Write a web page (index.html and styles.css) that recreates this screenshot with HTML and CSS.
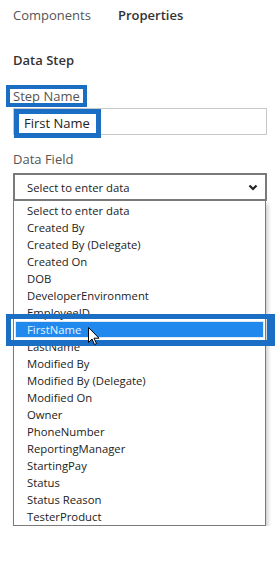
FILE: index.html
```html
<!DOCTYPE html>
<html lang="en">
  <head>
    <meta charset="UTF-8" />
    <meta name="viewport" content="width=device-width, initial-scale=1.0" />
    <title>Properties</title>
    <link rel="stylesheet" href="styles.css">
  </head>
  <body>
    <div class="panel">
      <div class="tabs">
        <span class="tab">Components</span>
        <span class="tab active">Properties</span>
      </div>

      <div class="section-title">Data Step</div>

      <div class="field-label"><span class="mark">Step Name</span></div>
      <div class="text-input"><span class="mark mark-input">First Name</span></div>

      <div class="field-label">Data Field</div>
      <div class="select">
        <span>Select to enter data</span>
        <svg class="chevron" width="10" height="7" viewBox="0 0 10 7">
          <polyline points="1.5,1.5 5,5 8.5,1.5" fill="none" stroke="#222" stroke-width="2.2" />
        </svg>
      </div>

      <div class="dropdown">
        <ul class="options">
          <li>Select to enter data</li>
          <li>Created By</li>
          <li>Created By (Delegate)</li>
          <li>Created On</li>
          <li>DOB</li>
          <li>DeveloperEnvironment</li>
          <li>EmployeeID</li>
          <li class="selected">FirstName</li>
          <li>LastName</li>
          <li>Modified By</li>
          <li>Modified By (Delegate)</li>
          <li>Modified On</li>
          <li>Owner</li>
          <li>PhoneNumber</li>
          <li>ReportingManager</li>
          <li>StartingPay</li>
          <li>Status</li>
          <li>Status Reason</li>
          <li>TesterProduct</li>
        </ul>
        <!-- recuadro azul de anotacion sobre la opcion elegida -->
        <div class="highlight-box"></div>
        <svg class="cursor" width="12" height="19" viewBox="0 0 12 19">
          <path d="M0.5,0.5 L0.5,15.5 L4,12 L6.5,17.5 L8.5,16.6 L6,11.2 L11,11.2 Z" fill="#fff" stroke="#000" stroke-width="1" stroke-linejoin="round" />
        </svg>
      </div>
    </div>
  </body>
</html>
```

FILE: styles.css
```css
body {
  margin: 0;
  padding: 0;
  background: #fff;
  font-family: "Open Sans", "Noto Sans", sans-serif;
  color: #333;
}

.panel {
  padding: 0 13px;
}

.tabs {
  display: flex;
  gap: 27px;
  height: 30px;
  line-height: 30px;
  font-size: 13px;
}
.tab {
  color: #555;
}
.tab.active {
  color: #333;
  font-weight: 600;
}

.section-title {
  margin-top: 20px;
  line-height: 20px;
  font-size: 13px;
  font-weight: 600;
  color: #333;
}

.field-label {
  margin-top: 14px;
  height: 20px;
  line-height: 20px;
  font-size: 13px;
  color: #555;
}

.mark {
  display: inline-block;
  line-height: 14px;
  padding: 0 3px;
  margin-left: -3px;
  vertical-align: middle;
  outline: 4px solid #1a6fc5;
  background: #fff;
}

.text-input {
  margin-top: 4px;
  height: 27px;
  box-sizing: border-box;
  border: 1px solid #c8c8c8;
  padding: 4px 0 0 5px;
  font-size: 13px;
  color: #222;
}
.mark-input {
  line-height: 19px;
  padding: 0 6px 0 5px;
  margin-left: 0;
  outline-width: 5px;
}

.field-label + .select {
  margin-top: 4px;
}
.select {
  height: 28px;
  box-sizing: border-box;
  border: 2px solid #7a7a7a;
  display: flex;
  align-items: center;
  justify-content: space-between;
  padding: 0 7px 0 12px;
  font-size: 11.3px;
  color: #222;
}

.dropdown {
  position: relative;
  width: 253px;
}
.options {
  list-style: none;
  margin: 0;
  padding: 0;
  border: 1px solid #7a7a7a;
  border-top: none;
  background: #fff;
  box-shadow: 2px 3px 4px rgba(0, 0, 0, 0.2);
  padding-top: 1px;
}
.options li {
  height: 17px;
  line-height: 17px;
  padding-left: 13px;
  font-size: 11.3px;
  color: #222;
  white-space: nowrap;
}
.options li.selected {
  background: #2189ee;
  color: #e8f3ff;
  margin: 0 1px;
  padding-left: 12px;
  box-shadow: inset 0 0 0 1px #dbe9f7;
}

.highlight-box {
  position: absolute;
  left: -7px;
  top: 113px;
  width: 269px;
  height: 32px;
  box-sizing: border-box;
  border-style: solid;
  border-color: #1a6fc5;
  border-width: 5px 8px 6px 5px;
  pointer-events: none;
}

.cursor {
  position: absolute;
  left: 75px;
  top: 126px;
}
```
